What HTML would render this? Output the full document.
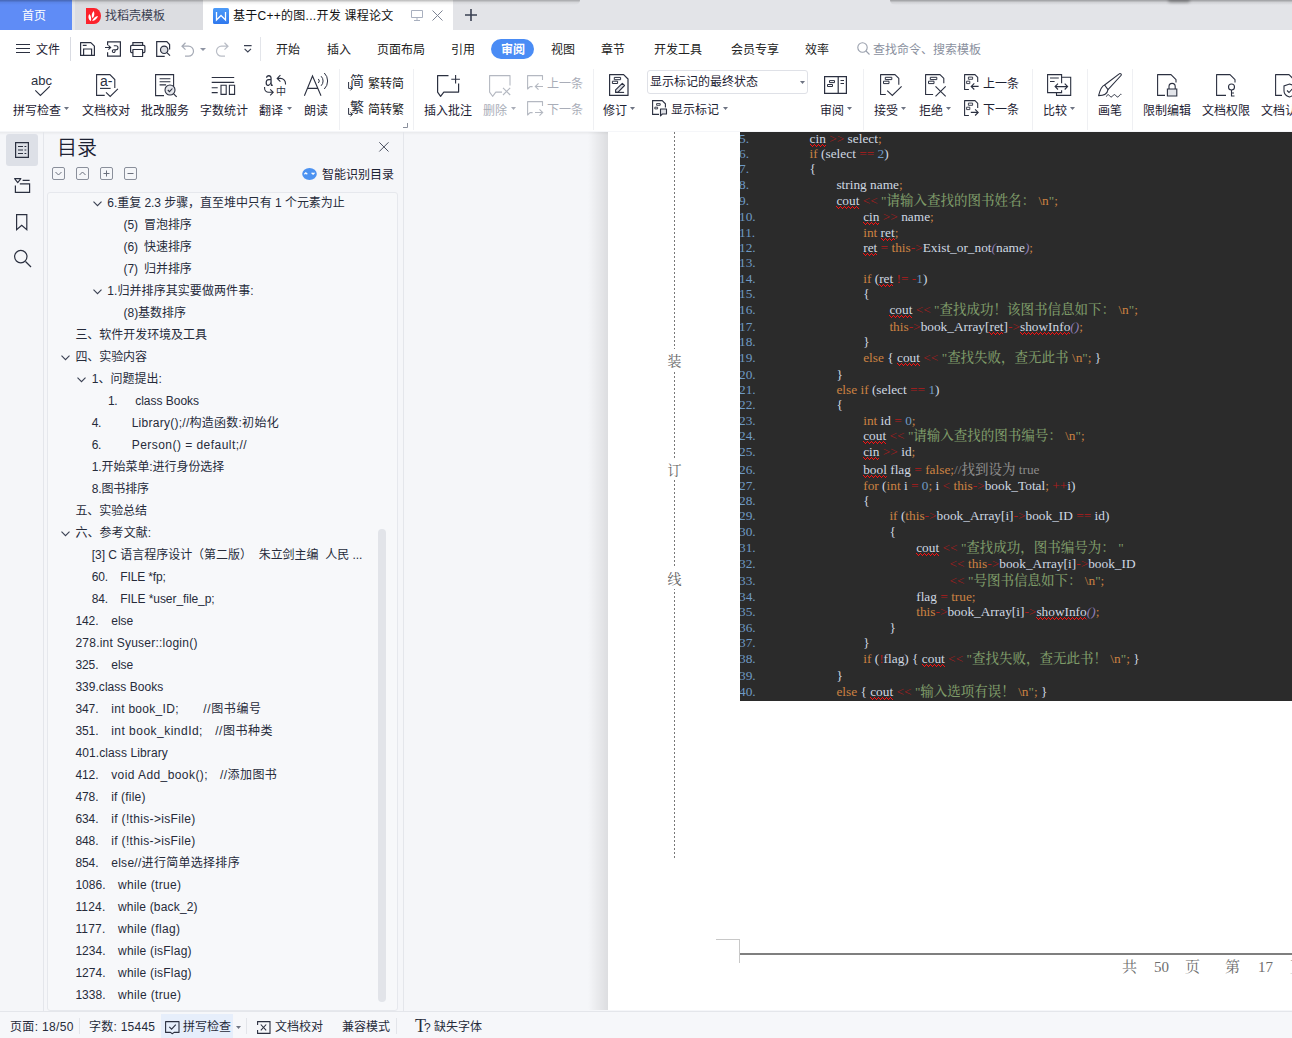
<!DOCTYPE html>
<html lang="zh-CN">
<head>
<meta charset="utf-8">
<title>WPS</title>
<style>
*{box-sizing:border-box;margin:0;padding:0}
html,body{width:1292px;height:1038px;overflow:hidden;background:#fff}
body{position:relative;font-family:"Liberation Sans","Noto Sans CJK SC",sans-serif;font-size:12px;color:#222;}
.abs{position:absolute}
.t{position:absolute;white-space:nowrap;line-height:16px;height:16px}
svg{position:absolute;overflow:visible}
.lb{top:37px;color:#1d2233}
.dd{position:absolute;top:41px;width:5px;height:3px;background:#6d7382;clip-path:polygon(0 0,100% 0,50% 100%)}
.vs{position:absolute;top:3px;width:1px;height:61px;background:#eff0f3}
.ti{white-space:pre;color:#262b3a;line-height:18px;height:18px}
.cl{position:absolute;left:0;width:552px;height:16px;line-height:16px;font-family:"Liberation Serif","Noto Serif CJK SC",serif;font-size:13.330px;color:#cfd8e2;white-space:pre}
.ln{position:absolute;left:-1px;color:#6f9ac4}
.cd{position:absolute;top:0}
.k{color:#cc8242}.o{color:#b01c1c}.n{color:#6f9ac4}.s{color:#7d9a68}.c{color:#8a8a8a}.p{color:#8f7fb8;font-style:italic}
.z{font-family:"Noto Serif CJK SC",serif;font-size:13.500px;line-height:0;font-weight:500}
.w{position:relative}
.wv{position:absolute;left:0;top:13px;width:100%;height:3px;overflow:hidden}
.bz{font-family:"Noto Serif CJK SC",serif;font-size:14px;color:#666;background:#fff;line-height:22px;height:22px}
.ft{font-family:"Liberation Serif","Noto Serif CJK SC",serif;font-size:15px;color:#6e6e6e;line-height:20px;height:20px}
/* tab bar */
#tabbar{position:absolute;left:0;top:0;width:1292px;height:30px;background:#e3e4e8}
#tab-home{position:absolute;left:0;top:0;width:72px;height:30px;background:#5f8cf6;color:#fff;font-size:12px;line-height:32px;text-align:left;padding-left:22px}
#tab-tpl{position:absolute;left:72px;top:0;width:131px;height:30px;background:#dcdde1}
#tab-doc{position:absolute;left:203px;top:0;width:250px;height:30px;background:#fff}
/* menu row */
#menurow{position:absolute;left:0;top:30px;width:1292px;height:36px;background:#fff}
#ribbon{position:absolute;left:0;top:66px;width:1292px;height:65px;background:#fff}
#main{position:absolute;left:0;top:131px;width:1292px;height:880px;background:#f5f6f9;overflow:hidden}
#status{position:absolute;left:0;top:1011px;width:1292px;height:27px;background:#f6f7fa;border-top:1px solid #e4e6eb}
</style>
</head>
<body>
<div id="tabbar">
  <div id="tab-home">首页</div>
  <div id="tab-tpl">
    <svg style="left:14px;top:8px" width="15" height="16" viewBox="0 0 15 16"><path d="M0 0h8a7 8 0 0 1 0 16h-8z" fill="#fc222c"/><path d="M3.200 6c2 2 2.500 4.600 1.500 7.300-2.300-1.700-3-4.700-1.500-7.300zM7.700 2.900c1.200 2.500.8 5.200-1.200 7.400-1.400-2.500-.8-5.400 1.200-7.400zM12 8c-.7 2.700-2.900 4.600-5.800 5.100.7-2.800 3-4.700 5.800-5.100z" fill="#fff"/></svg>
    <span class="t" style="left:33px;top:8px;color:#3a4052">找稻壳模板</span>
  </div>
  <div id="tab-doc">
    <svg style="left:10px;top:8px" width="16" height="16" viewBox="0 0 16 16"><defs><linearGradient id="wg" x1="0" y1="0" x2="0" y2="1"><stop offset="0" stop-color="#4d9bf8"/><stop offset="1" stop-color="#2f78ee"/></linearGradient></defs><rect width="16" height="16" rx="1.500" fill="url(#wg)"/><path d="M3.500 4v8l4.500-4.500 4.500 4.500v-8" fill="none" stroke="#fff" stroke-width="1.300"/></svg>
    <span class="t" style="left:30px;top:8px;font-size:12px;color:#111;letter-spacing:.27px">基于C++的图...开发 课程论文</span>
    <svg style="left:208px;top:10px" width="12" height="11" viewBox="0 0 12 11"><path d="M.5.500h11v7h-11zM6 7.500v3M3 10.500h6" fill="none" stroke="#a9b0bf" stroke-width="1"/></svg>
    <svg style="left:229px;top:10px" width="11" height="11" viewBox="0 0 11 11"><path d="M.5.500l10 10M10.500.500l-10 10" fill="none" stroke="#7d8494" stroke-width="1"/></svg>
  </div>
  <svg style="left:465px;top:9px" width="12" height="12" viewBox="0 0 12 12"><path d="M6 0v12M0 6h12" fill="none" stroke="#3a4052" stroke-width="1.600"/></svg>
  <div class="abs" style="left:72px;top:0;width:3px;height:30px;background:#e6e7ea"></div>
  <div class="abs" style="left:0;top:0;width:580px;height:5px;background:linear-gradient(rgba(0,0,0,.28),rgba(0,0,0,.06) 50%,rgba(0,0,0,0));border-radius:0 0 6px 0"></div>
  <div class="abs" style="left:890px;top:0;width:402px;height:5px;background:linear-gradient(rgba(0,0,0,.32),rgba(0,0,0,.08) 50%,rgba(0,0,0,0));border-radius:0 0 0 6px"></div>
  <div class="abs" style="left:1168px;top:-3px;width:22px;height:6px;background:rgba(0,0,0,.25);border-radius:3px;filter:blur(1.500px)"></div>
</div>
<div id="menurow">
  <svg style="left:16px;top:14px" width="15" height="10" viewBox="0 0 15 10"><path d="M0 .500h14M0 4.500h14M0 8.500h14" stroke="#2b3040" stroke-width="1" fill="none"/></svg>
  <span class="t" style="left:36px;top:12px;color:#1d2233">文件</span>
  <div class="abs" style="left:70px;top:7px;width:1px;height:24px;background:#d9dbe2"></div>
  <!-- save -->
  <svg style="left:80px;top:12px" width="15" height="14" viewBox="0 0 15 14"><path d="M.6.600h10.200l3.600 3.600v9.200h-13.800z" fill="none" stroke="#2b3040" stroke-width="1.200" stroke-linejoin="round"/><path d="M2.800 3.400h3.800M3.600 13.400v-6.400h8v6.400" fill="none" stroke="#2b3040" stroke-width="1.200"/></svg>
  <!-- export -->
  <svg style="left:105px;top:11px" width="16" height="16" viewBox="0 0 16 16"><path d="M2.600 4.200v-3.400h12.800v14.400h-12.800v-4" fill="none" stroke="#2b3040" stroke-width="1.200"/><path d="M0 6.500h5.600M3.400 4.300l2.300 2.200-2.300 2.200" fill="none" stroke="#2b3040" stroke-width="1.100"/><path d="M8.800 4.700h2.200a2 2 0 0 1 0 4h-2.300a1.400 1.400 0 1 0 1.400 1.400v-1.200" fill="none" stroke="#2b3040" stroke-width="1.100"/></svg>
  <!-- print -->
  <svg style="left:130px;top:12px" width="16" height="15" viewBox="0 0 16 15"><path d="M2.900 3.400v-2.800h9.700v2.800" fill="none" stroke="#2b3040" stroke-width="1.200"/><path d="M2.900 10.600h-1.300a1 1 0 0 1-1-1v-5.200a1 1 0 0 1 1-1h12.300a1 1 0 0 1 1 1v5.200a1 1 0 0 1-1 1h-1.300" fill="none" stroke="#2b3040" stroke-width="1.200"/><path d="M2.900 7.500h9.700v7h-9.700z" fill="none" stroke="#2b3040" stroke-width="1.200" stroke-linejoin="round"/></svg>
  <!-- preview -->
  <svg style="left:156px;top:11px" width="15" height="16" viewBox="0 0 15 16"><path d="M13.600 8.500v-5l-2.800-2.800h-10.100v14.600h8" fill="none" stroke="#2b3040" stroke-width="1.200"/><circle cx="8.200" cy="8.800" r="3.700" fill="#dcdee3" stroke="#2b3040" stroke-width="1.200"/><path d="M10.900 11.600l3.100 3.100" stroke="#2b3040" stroke-width="1.200"/></svg>
  <!-- undo -->
  <svg style="left:181px;top:12px" width="14" height="15" viewBox="0 0 14 15"><path d="M4.500.800l-3.500 3.400 3.500 3.400M1.200 4.200h6.300a5 5 0 0 1 0 10h-3.500" fill="none" stroke="#a6abb6" stroke-width="1.200"/></svg>
  <svg style="left:200px;top:18px" width="6" height="3" viewBox="0 0 6 3"><path d="M0 0h6l-3 3z" fill="#8e94a3"/></svg>
  <!-- redo -->
  <svg style="left:215px;top:12px" width="14" height="15" viewBox="0 0 14 15"><path d="M9.500.800l3.500 3.400-3.500 3.400M12.800 4.200h-6.300a5 5 0 0 0 0 10h3.500" fill="none" stroke="#b9bdc6" stroke-width="1.200"/></svg>
  <!-- more -->
  <svg style="left:244px;top:15px" width="8" height="8" viewBox="0 0 8 8"><path d="M0 .600h7.600M.6 3.800l3.200 3.200 3.200-3.200" fill="none" stroke="#3a4052" stroke-width="1.100"/></svg>
  <div class="abs" style="left:260px;top:7px;width:1px;height:24px;background:#e3e5ea"></div>
  <span class="t" style="left:276px;top:12px">开始</span>
  <span class="t" style="left:327px;top:12px">插入</span>
  <span class="t" style="left:377px;top:12px">页面布局</span>
  <span class="t" style="left:451px;top:12px">引用</span>
  <div class="abs" style="left:491px;top:9px;width:43px;height:20px;border-radius:10px;background:#4a8cf5"></div>
  <span class="t" style="left:501px;top:12px;color:#fff;font-weight:bold">审阅</span>
  <span class="t" style="left:551px;top:12px">视图</span>
  <span class="t" style="left:601px;top:12px">章节</span>
  <span class="t" style="left:654px;top:12px">开发工具</span>
  <span class="t" style="left:731px;top:12px">会员专享</span>
  <span class="t" style="left:805px;top:12px">效率</span>
  <svg style="left:857px;top:12px" width="13" height="13" viewBox="0 0 13 13"><circle cx="5.500" cy="5.500" r="4.700" fill="none" stroke="#9aa0ad" stroke-width="1.100"/><path d="M9 9l3.500 3.500" stroke="#9aa0ad" stroke-width="1.100"/></svg>
  <span class="t" style="left:873px;top:12px;color:#8a909e">查找命令、搜索模板</span>
</div>
<div id="ribbon">
  <!-- 拼写检查 -->
  <span class="t" style="left:31px;top:6px;font-size:13px;line-height:18px;height:18px;color:#2b3040;letter-spacing:0">abc</span>
  <svg style="left:34px;top:20px" width="18" height="11" viewBox="0 0 18 11"><path d="M1.300 4.300l5.100 5.100 9.400-9.100" fill="none" stroke="#2b3040" stroke-width="1.100"/></svg>
  <span class="t lb" style="left:13px">拼写检查</span><i class="dd" style="left:64px"></i>
  <!-- 文档校对 -->
  <svg style="left:96px;top:8px" width="23" height="24" viewBox="0 0 23 24"><path d="M8.700 21.400h-8.100v-20.800h13.300l4.900 4.900v8.500" fill="none" stroke="#2b3040" stroke-width="1.100"/><path d="M4 14.400h10.600" stroke="#2b3040" stroke-width="1.100"/><path d="M10 18.300l4.200 4.200 7.700-7.600" fill="none" stroke="#2b3040" stroke-width="1.100"/></svg>
  <span class="t" style="left:100px;top:6px;font-size:14px;line-height:18px;height:18px;color:#2b3040;letter-spacing:0">a-</span>
  <span class="t lb" style="left:82px">文档校对</span>
  <!-- 批改服务 -->
  <svg style="left:155px;top:8px" width="23" height="25" viewBox="0 0 23 25"><path d="M9 21.600h-8.400v-21h18v11.500" fill="none" stroke="#2b3040" stroke-width="1.100"/><path d="M4.600 4.700h10.800M4.600 7.800h10.800M4.600 10.900h6.500" stroke="#2b3040" stroke-width="1.100"/><circle cx="15" cy="16" r="5" fill="#e3e5ea" stroke="#2b3040" stroke-width="1.100"/><path d="M12.800 16l1.700 1.700 2.900-3.200" fill="none" stroke="#2b3040" stroke-width="1.100"/><path d="M18.700 19.800l3 3" stroke="#2b3040" stroke-width="1.200"/></svg>
  <span class="t lb" style="left:141px">批改服务</span>
  <!-- 字数统计 -->
  <svg style="left:211px;top:9px" width="24" height="21" viewBox="0 0 24 21"><path d="M.7 2.500h22.500M.7 7.400h22.500M.7 12.800h6M.7 17.600h6" stroke="#2b3040" stroke-width="1.100"/><path d="M10 10.200h5.200v9.200h-5.200zM18.400 10.200h5.200v9.200h-5.200z" fill="none" stroke="#2b3040" stroke-width="1.100"/></svg>
  <span class="t lb" style="left:200px">字数统计</span>
  <!-- 翻译 -->
  <span class="t" style="left:265px;top:1px;font-size:20px;line-height:24px;height:24px;color:#2b3040;transform:scaleX(.7);transform-origin:0 0">a</span>
  <span class="t" style="left:276px;top:18px;font-size:10px;line-height:16px;color:#2b3040">中</span>
  <svg style="left:264px;top:8px" width="24" height="24" viewBox="0 0 24 24"><path d="M13.200 4.400h3.300a5 5 0 0 1 5 5v1.200M16.400 1.200l-3.200 3.200 3.200 3.200" fill="none" stroke="#2b3040" stroke-width="1.100"/><path d="M.6 13v1.300a4 4 0 0 0 4 4h4.400M6.200 15.300l3 3-3 3" fill="none" stroke="#2b3040" stroke-width="1.100"/></svg>
  <span class="t lb" style="left:259px">翻译</span><i class="dd" style="left:287px"></i>
  <!-- 朗读 -->
  <svg style="left:304px;top:8px" width="25" height="24" viewBox="0 0 25 24"><path d="M.4 21.800l8.100-19.800 8.500 19.800M3.500 14.400h10.200" fill="none" stroke="#2b3040" stroke-width="1.100"/><path d="M14.350 4.950a2.900 2.900 0 0 1 0 4.100M17.100 2.200a6.800 6.800 0 0 1 0 9.600M20.300-1a11.300 11.300 0 0 1 0 16" fill="none" stroke="#2b3040" stroke-width="1"/></svg>
  <span class="t lb" style="left:304px">朗读</span>
  <div class="vs" style="left:339px"></div>
  <!-- 繁转简 -->
  <span class="t" style="left:350px;top:6px;font-size:14px;line-height:18px;height:18px;color:#2b3040">简</span>
  <svg style="left:348px;top:16px" width="5" height="9" viewBox="0 0 5 9"><path d="M.6 0v6.400h3.600M2.400 4.400l2 2-2 2" fill="none" stroke="#2b3040" stroke-width="1"/></svg>
  <span class="t" style="left:368px;top:10px">繁转简</span>
  <span class="t" style="left:350px;top:32px;font-size:14px;line-height:18px;height:18px;color:#2b3040">繁</span>
  <svg style="left:348px;top:42px" width="5" height="9" viewBox="0 0 5 9"><path d="M.6 0v6.400h3.600M2.400 4.400l2 2-2 2" fill="none" stroke="#2b3040" stroke-width="1"/></svg>
  <span class="t" style="left:368px;top:36px">简转繁</span>
  <svg style="left:403px;top:57px" width="5" height="5" viewBox="0 0 5 5"><path d="M4.500 0v4.500h-4.500" fill="none" stroke="#8a8f9c" stroke-width="1"/></svg>
  <div class="vs" style="left:413px"></div>
  <!-- 插入批注 -->
  <svg style="left:437px;top:9px" width="23" height="23" viewBox="0 0 23 23"><path d="M11.500.600h-10.900v16.500l3 4.200 3.200-4.200h14.800v-8.500" fill="none" stroke="#2b3040" stroke-width="1.200" stroke-linejoin="round"/><path d="M18.600 0v8.600M14.300 4.300h8.600" stroke="#2b3040" stroke-width="1.100"/></svg>
  <span class="t lb" style="left:424px">插入批注</span>
  <!-- 删除 -->
  <svg style="left:488px;top:9px" width="23" height="23" viewBox="0 0 23 23"><path d="M14 17.100h-6.200l-3.200 4.200-3-4.200v-16.500h20.400v10" fill="none" stroke="#b4b8c1" stroke-width="1.100" stroke-linejoin="round"/><path d="M15 12.800l7.200 7.200M22.200 12.800l-7.200 7.200" stroke="#b4b8c1" stroke-width="1.100"/></svg>
  <span class="t lb" style="left:483px;color:#a9adb8">删除</span><i class="dd" style="left:511px;background:#a9adb8"></i>
  <!-- 上一条 / 下一条 (disabled) -->
  <svg style="left:527px;top:9px" width="17" height="16" viewBox="0 0 17 16"><path d="M15.500 5v-4.400h-14.900v13.400l2.400-2.400h2.600" fill="none" stroke="#b4b8c1" stroke-width="1.100" stroke-linejoin="round"/><path d="M16 11.500h-7.500M11.500 8.300l-3.200 3.200 3.200 3.200" fill="none" stroke="#b4b8c1" stroke-width="1.100"/></svg>
  <span class="t" style="left:547px;top:10px;color:#a9adb8">上一条</span>
  <svg style="left:527px;top:35px" width="17" height="16" viewBox="0 0 17 16"><path d="M15.500 5v-4.400h-14.900v13.400l2.400-2.400h2.600" fill="none" stroke="#b4b8c1" stroke-width="1.100" stroke-linejoin="round"/><path d="M8 11.500h7.500M12.500 8.300l3.200 3.200-3.200 3.200" fill="none" stroke="#b4b8c1" stroke-width="1.100"/></svg>
  <span class="t" style="left:547px;top:36px;color:#a9adb8">下一条</span>
  <div class="vs" style="left:593px"></div>
  <!-- 修订 -->
  <svg style="left:609px;top:8px" width="20" height="22" viewBox="0 0 20 22"><path d="M.6.600h14l4.400 4.400v16.400h-18.400z" fill="none" stroke="#2b3040" stroke-width="1.200" stroke-linejoin="round"/><path d="M5.300 3.400h6.300v2.300h-6.300zM3.400 7.200h5.200v2.300h-5.200z" fill="none" stroke="#2b3040" stroke-width="1"/><path d="M6.600 18.400v-2.600l6.700-6.500 2.200 2.200-6.600 6.900z" fill="#dfe1e6" stroke="#2b3040" stroke-width="1.100" stroke-linejoin="round"/><path d="M6.600 18.400h8.500" stroke="#2b3040" stroke-width="1.100"/></svg>
  <span class="t lb" style="left:603px">修订</span><i class="dd" style="left:630px"></i>
  <!-- dropdown -->
  <div class="abs" style="left:647px;top:4px;width:161px;height:24px;border:1px solid #dfe1e7;border-radius:3px;background:#fff"></div>
  <span class="t" style="left:650px;top:8px;color:#1d2233">显示标记的最终状态</span>
  <i class="dd" style="left:800px;top:15px"></i>
  <!-- 显示标记 -->
  <svg style="left:652px;top:34px" width="16" height="16" viewBox="0 0 16 16"><path d="M7 14.400h-6.400v-13.800h9.600l3.200 3.200v3.800" fill="none" stroke="#2b3040" stroke-width="1.100"/><path d="M4.600 3.600h3.600v1.700h-3.600zM2.800 7.200h2.800v1.700h-2.800z" fill="none" stroke="#2b3040" stroke-width=".9"/><path d="M8.500 9h6v5h-4.200l-1.800 1.800z" fill="#dfe1e6" stroke="#2b3040" stroke-width="1.100" stroke-linejoin="round"/></svg>
  <span class="t" style="left:671px;top:36px;color:#1d2233">显示标记</span><i class="dd" style="left:723px;top:41px"></i>
  <!-- 审阅 -->
  <svg style="left:824px;top:10px" width="23" height="18" viewBox="0 0 23 18"><path d="M.6.600h21.800v16.800h-21.800zM14.200.600v16.800" fill="none" stroke="#2b3040" stroke-width="1.200"/><path d="M5.500 4.600h5v2h-5zM3.500 8.500h5v2h-5z" fill="none" stroke="#2b3040" stroke-width="1"/><path d="M16.500 4.500h3.500M16.500 7.500h3.500" stroke="#2b3040" stroke-width="1"/></svg>
  <span class="t lb" style="left:820px">审阅</span><i class="dd" style="left:847px"></i>
  <div class="vs" style="left:863px"></div>
  <!-- 接受 -->
  <svg style="left:880px;top:8px" width="23" height="23" viewBox="0 0 23 23"><path d="M5.800 20.500h-5.200v-19.900h14.400l3.800 3.800v6.300" fill="none" stroke="#2b3040" stroke-width="1.100" stroke-linejoin="round"/><path d="M5.300 3.300h6.500v2.300h-6.500zM3.500 7.200h5.500v2.400h-5.500z" fill="none" stroke="#2b3040" stroke-width="1"/><path d="M7.200 16.700l5.100 4.700 9.300-9" fill="none" stroke="#2b3040" stroke-width="1.100"/></svg>
  <span class="t lb" style="left:874px">接受</span><i class="dd" style="left:901px"></i>
  <!-- 拒绝 -->
  <svg style="left:925px;top:8px" width="23" height="24" viewBox="0 0 23 24"><path d="M8.100 20.500h-7.500v-19.900h14.400l3.800 3.800v4.900" fill="none" stroke="#2b3040" stroke-width="1.100" stroke-linejoin="round"/><path d="M5.300 3.300h6.500v2.300h-6.500zM3.500 7.200h5.500v2.400h-5.500z" fill="none" stroke="#2b3040" stroke-width="1"/><path d="M10.500 12.400l10.200 9.900M20.700 12.400l-10.200 9.900" fill="none" stroke="#2b3040" stroke-width="1.100"/></svg>
  <span class="t lb" style="left:919px">拒绝</span><i class="dd" style="left:946px"></i>
  <!-- 上一条 / 下一条 -->
  <svg style="left:964px;top:8px" width="16" height="17" viewBox="0 0 16 17"><path d="M4.900 15.500h-4.300v-14.900h10.400l2.700 2.700v4.700" fill="none" stroke="#2b3040" stroke-width="1.100" stroke-linejoin="round"/><path d="M4.400 3.100h4.200v2.200h-4.200zM2.600 7.200h3.200v2.400h-3.200z" fill="none" stroke="#2b3040" stroke-width=".9"/><path d="M14.600 12.400h-7.400M10.300 9.300l-3.100 3.100 3.100 3.100" fill="none" stroke="#2b3040" stroke-width="1.100"/></svg>
  <span class="t" style="left:983px;top:10px;color:#1d2233">上一条</span>
  <svg style="left:964px;top:34px" width="16" height="17" viewBox="0 0 16 17"><path d="M4.900 15.500h-4.300v-14.900h10.400l2.700 2.700v4.700" fill="none" stroke="#2b3040" stroke-width="1.100" stroke-linejoin="round"/><path d="M4.400 3.100h4.200v2.200h-4.200zM2.600 7.200h3.200v2.400h-3.200z" fill="none" stroke="#2b3040" stroke-width=".9"/><path d="M6.800 12.400h7.400M11.100 9.300l3.100 3.100-3.100 3.100" fill="none" stroke="#2b3040" stroke-width="1.100"/></svg>
  <span class="t" style="left:983px;top:36px;color:#1d2233">下一条</span>
  <div class="vs" style="left:1032px"></div>
  <!-- 比较 -->
  <svg style="left:1047px;top:8px" width="24" height="22" viewBox="0 0 24 22"><path d="M14.600 9.300v-8.700h-14v18h14v-2.300" fill="none" stroke="#2b3040" stroke-width="1.100"/><path d="M3 4h8.800M3 7.500h4.600" stroke="#2b3040" stroke-width="1"/><path d="M14.600 3.300h9.100v18.100h-14.200v-2.800" fill="none" stroke="#2b3040" stroke-width="1.100"/><path d="M8.300 12.600h12.300M11 9.700l-2.900 2.900 2.900 2.900M17.700 9.700l2.900 2.900-2.900 2.900" fill="none" stroke="#2b3040" stroke-width="1.100"/></svg>
  <span class="t lb" style="left:1043px">比较</span><i class="dd" style="left:1070px"></i>
  <div class="vs" style="left:1087px"></div>
  <!-- 画笔 -->
  <svg style="left:1098px;top:7px" width="25" height="25" viewBox="0 0 25 25"><path d="M6.600 12l14.600-11.100a1.200 1.200 0 0 1 1.800 1.600l-13 14.100" fill="none" stroke="#2b3040" stroke-width="1.100"/><path d="M6.600 12c-3.300 1.200-4.600 5-6 10.600 4.500 0 8.600-1.100 9.400-6z" fill="none" stroke="#2b3040" stroke-width="1.100" stroke-linejoin="round"/><path d="M8.400 23.600c1-2.400 2.200-2.400 3.200-.8s2.200 1.600 3.200 0 2.200-1.600 3.200 0 2.200 1.600 3.200 0 1.400-1.600 2.200-1.400" fill="none" stroke="#2b3040" stroke-width="1"/></svg>
  <span class="t lb" style="left:1098px">画笔</span>
  <div class="vs" style="left:1132px"></div>
  <!-- 限制编辑 -->
  <svg style="left:1157px;top:8px" width="21" height="23" viewBox="0 0 21 23"><path d="M8 21.400h-7.400v-20.800h13.400l5 5v3" fill="none" stroke="#2b3040" stroke-width="1.100" stroke-linejoin="round"/><path d="M10.400 15h9.400v7h-9.400z" fill="#e3e5ea" stroke="#2b3040" stroke-width="1.100"/><path d="M12 15v-2.500a3.100 3.100 0 0 1 6.200 0v2.500" fill="none" stroke="#2b3040" stroke-width="1.100"/></svg>
  <span class="t lb" style="left:1143px">限制编辑</span>
  <!-- 文档权限 -->
  <svg style="left:1216px;top:8px" width="21" height="23" viewBox="0 0 21 23"><path d="M10 21.400h-9.400v-20.800h13.400l5 5v3" fill="none" stroke="#2b3040" stroke-width="1.100" stroke-linejoin="round"/><circle cx="15.500" cy="13" r="3" fill="none" stroke="#2b3040" stroke-width="1.100"/><path d="M15.500 16v6h3M15.500 19h2.500" fill="none" stroke="#2b3040" stroke-width="1.100"/></svg>
  <span class="t lb" style="left:1202px">文档权限</span>
  <!-- 文档认证 -->
  <svg style="left:1275px;top:8px" width="21" height="23" viewBox="0 0 21 23"><path d="M7 21.400h-6.400v-20.800h13.400l5 5" fill="none" stroke="#2b3040" stroke-width="1.100" stroke-linejoin="round"/><path d="M14.500 10l5.500 2v5c0 3-2.500 5-5.500 6-3-1-5.500-3-5.500-6v-5z" fill="#fff" stroke="#2b3040" stroke-width="1.100"/><path d="M12 16.500l2 2 3.500-3.800" fill="none" stroke="#2b3040" stroke-width="1.100"/></svg>
  <span class="t lb" style="left:1261px">文档认证</span>
</div>
<div id="main">
  <div class="abs" style="left:0;top:1px;width:1292px;height:3px;background:linear-gradient(rgba(0,0,0,.05),rgba(0,0,0,0))"></div>
  <div class="abs" style="left:43px;top:1px;width:1px;height:880px;background:#e4e6eb"></div>
  <div class="abs" style="left:6px;top:3px;width:32px;height:32px;border-radius:3px;background:#dde0e7"></div>
  <svg style="left:15px;top:11px" width="14" height="16" viewBox="0 0 14 16"><path d="M.6.600h12.800v14.800h-12.800z" fill="none" stroke="#2b3040" stroke-width="1.200"/><path d="M3 4.500h5M3 8h5M3 11.500h5M9.500 4.500h1.800M9.500 8h1.800M9.500 11.500h1.800" stroke="#2b3040" stroke-width="1.100"/></svg>
  <svg style="left:14px;top:47px" width="17" height="16" viewBox="0 0 17 16"><path d="M.6.600h6.300l-3.150 4.100zM8.600 2.400h7" fill="none" stroke="#2b3040" stroke-width="1.100" stroke-linejoin="round"/><path d="M1.400 7.400v7h14.200v-8.600h-9.800" fill="none" stroke="#2b3040" stroke-width="1.200"/></svg>
  <svg style="left:16px;top:83px" width="12" height="17" viewBox="0 0 12 17"><path d="M.6.600h10.200v15l-5.100-4.400-5.100 4.400z" fill="none" stroke="#2b3040" stroke-width="1.200" stroke-linejoin="miter"/></svg>
  <svg style="left:14px;top:119px" width="18" height="18" viewBox="0 0 18 18"><circle cx="6.800" cy="6.600" r="6.200" fill="none" stroke="#2b3040" stroke-width="1.200"/><path d="M11.500 11.500l5.500 5.500" stroke="#2b3040" stroke-width="1.300"/></svg>
  <span class="t" style="left:57px;top:3px;font-size:20px;line-height:28px;height:28px;color:#1d2233;font-weight:350">目录</span>
  <svg style="left:379px;top:11px" width="10" height="10" viewBox="0 0 10 10"><path d="M.3.300l9.200 9.200M9.500.300l-9.200 9.200" stroke="#4a5060" stroke-width="1" fill="none"/></svg>
  <svg style="left:52px;top:36px" width="13" height="13" viewBox="0 0 13 13"><rect x=".5" y=".5" width="12" height="12" rx="1.500" fill="none" stroke="#8a8f9b" stroke-width="1"/><path d="M3.500 5l3 3 3-3" fill="none" stroke="#6a6f7c" stroke-width="1"/></svg>
  <svg style="left:76px;top:36px" width="13" height="13" viewBox="0 0 13 13"><rect x=".5" y=".5" width="12" height="12" rx="1.500" fill="none" stroke="#8a8f9b" stroke-width="1"/><path d="M3.500 8l3-3 3 3" fill="none" stroke="#6a6f7c" stroke-width="1"/></svg>
  <svg style="left:100px;top:36px" width="13" height="13" viewBox="0 0 13 13"><rect x=".5" y=".5" width="12" height="12" rx="1.500" fill="none" stroke="#8a8f9b" stroke-width="1"/><path d="M3.500 6.500h6M6.500 3.500v6" fill="none" stroke="#6a6f7c" stroke-width="1"/></svg>
  <svg style="left:124px;top:36px" width="13" height="13" viewBox="0 0 13 13"><rect x=".5" y=".5" width="12" height="12" rx="1.500" fill="none" stroke="#8a8f9b" stroke-width="1"/><path d="M3.500 6.500h6" fill="none" stroke="#6a6f7c" stroke-width="1"/></svg>
  <svg style="left:302px;top:37px" width="15" height="12" viewBox="0 0 15 12"><ellipse cx="7.500" cy="6" rx="7.300" ry="6" fill="#4c92f1"/><path d="M2.400 6.200l1.400-1.400 1.500 1.400M9.600 4.800l1.500 1.400 1.400-1.400" fill="none" stroke="#fff" stroke-width="1.300"/></svg>
  <span class="t" style="left:322px;top:36px;color:#1d2233">智能识别目录</span>
  <div class="abs" style="left:47px;top:61px;width:351px;height:819px;border:1px solid #e6e8ed;border-radius:3px;background:#f7f8fa"></div>
  <div class="abs" style="left:378px;top:398px;width:8px;height:473px;border-radius:4px;background:#e2e4e9"></div>
  <svg style="left:93px;top:70px" width="9" height="6" viewBox="0 0 9 6"><path d="M.5.700l4 4 4-4" fill="none" stroke="#3a4052" stroke-width="1.100"/></svg>
  <span class="t ti" style="left:107.3px;top:63px;letter-spacing:-0.05px">6.重复 2.3 步骤，直至堆中只有 1 个元素为止</span>
  <span class="t ti" style="left:123.5px;top:85px;letter-spacing:-0.06px">(5)</span>
  <span class="t ti" style="left:144px;top:85px;letter-spacing:-0.05px">冒泡排序</span>
  <span class="t ti" style="left:123.5px;top:107px;letter-spacing:-0.06px">(6)</span>
  <span class="t ti" style="left:144px;top:107px;letter-spacing:-0.05px">快速排序</span>
  <span class="t ti" style="left:123.5px;top:129px;letter-spacing:-0.06px">(7)</span>
  <span class="t ti" style="left:144px;top:129px;letter-spacing:-0.05px">归并排序</span>
  <svg style="left:93px;top:158px" width="9" height="6" viewBox="0 0 9 6"><path d="M.5.700l4 4 4-4" fill="none" stroke="#3a4052" stroke-width="1.100"/></svg>
  <span class="t ti" style="left:107.3px;top:151px;letter-spacing:0.07px">1.归并排序其实要做两件事:</span>
  <span class="t ti" style="left:123.5px;top:173px;letter-spacing:-0.02px">(8)基数排序</span>
  <span class="t ti" style="left:75.4px;top:195px;letter-spacing:-0.04px">三、软件开发环境及工具</span>
  <svg style="left:61px;top:224px" width="9" height="6" viewBox="0 0 9 6"><path d="M.5.700l4 4 4-4" fill="none" stroke="#3a4052" stroke-width="1.100"/></svg>
  <span class="t ti" style="left:75.4px;top:217px;letter-spacing:-0.07px">四、实验内容</span>
  <svg style="left:77px;top:246px" width="9" height="6" viewBox="0 0 9 6"><path d="M.5.700l4 4 4-4" fill="none" stroke="#3a4052" stroke-width="1.100"/></svg>
  <span class="t ti" style="left:91.7px;top:239px;letter-spacing:0.03px">1、问题提出:</span>
  <span class="t ti" style="left:108px;top:261px;letter-spacing:-0.51px">1.</span>
  <span class="t ti" style="left:135.2px;top:261px;letter-spacing:-0.02px">class Books</span>
  <span class="t ti" style="left:91.7px;top:283px;letter-spacing:-0.36px">4.</span>
  <span class="t ti" style="left:131.7px;top:283px;letter-spacing:0.26px">Library();//构造函数:初始化</span>
  <span class="t ti" style="left:91.7px;top:305px;letter-spacing:-0.36px">6.</span>
  <span class="t ti" style="left:131.7px;top:305px;letter-spacing:0.46px">Person() = default;//</span>
  <span class="t ti" style="left:91.7px;top:327px;letter-spacing:-0.06px">1.开始菜单:进行身份选择</span>
  <span class="t ti" style="left:91.7px;top:349px;letter-spacing:-0.12px">8.图书排序</span>
  <span class="t ti" style="left:75.4px;top:371px;letter-spacing:-0.07px">五、实验总结</span>
  <svg style="left:61px;top:400px" width="9" height="6" viewBox="0 0 9 6"><path d="M.5.700l4 4 4-4" fill="none" stroke="#3a4052" stroke-width="1.100"/></svg>
  <span class="t ti" style="left:75.4px;top:393px;letter-spacing:0.07px">六、参考文献:</span>
  <span class="t ti" style="left:91.7px;top:415px;letter-spacing:-0.02px">[3] C 语言程序设计（第二版）  朱立剑主编  人民 ...</span>
  <span class="t ti" style="left:91.7px;top:437px;letter-spacing:-0.13px">60.</span>
  <span class="t ti" style="left:120.3px;top:437px;letter-spacing:-0.13px">FILE *fp;</span>
  <span class="t ti" style="left:91.7px;top:459px;letter-spacing:-0.13px">84.</span>
  <span class="t ti" style="left:120.3px;top:459px;letter-spacing:-0.06px">FILE *user_file_p;</span>
  <span class="t ti" style="left:75.4px;top:481px;letter-spacing:-0.06px">142.</span>
  <span class="t ti" style="left:111.2px;top:481px;letter-spacing:0.02px">else</span>
  <span class="t ti" style="left:75.4px;top:503px;letter-spacing:0.24px">278.int Syuser::login()</span>
  <span class="t ti" style="left:75.4px;top:525px;letter-spacing:-0.06px">325.</span>
  <span class="t ti" style="left:111.2px;top:525px;letter-spacing:0.02px">else</span>
  <span class="t ti" style="left:75.4px;top:547px;letter-spacing:0.03px">339.class Books</span>
  <span class="t ti" style="left:75.4px;top:569px;letter-spacing:-0.06px">347.</span>
  <span class="t ti" style="left:111.2px;top:569px;letter-spacing:0.30px">int book_ID;</span>
  <span class="t ti" style="left:203.2px;top:569px;letter-spacing:0.64px">//图书编号</span>
  <span class="t ti" style="left:75.4px;top:591px;letter-spacing:-0.06px">351.</span>
  <span class="t ti" style="left:111.2px;top:591px;letter-spacing:0.48px">int book_kindId;</span>
  <span class="t ti" style="left:215.2px;top:591px;letter-spacing:0.52px">//图书种类</span>
  <span class="t ti" style="left:75.4px;top:613px;letter-spacing:0.11px">401.class Library</span>
  <span class="t ti" style="left:75.4px;top:635px;letter-spacing:-0.06px">412.</span>
  <span class="t ti" style="left:111.2px;top:635px;letter-spacing:0.42px">void Add_book();</span>
  <span class="t ti" style="left:220px;top:635px;letter-spacing:0.44px">//添加图书</span>
  <span class="t ti" style="left:75.4px;top:657px;letter-spacing:-0.06px">478.</span>
  <span class="t ti" style="left:111.2px;top:657px;letter-spacing:0.19px">if (file)</span>
  <span class="t ti" style="left:75.4px;top:679px;letter-spacing:-0.06px">634.</span>
  <span class="t ti" style="left:111.2px;top:679px;letter-spacing:0.34px">if (!this-&gt;isFile)</span>
  <span class="t ti" style="left:75.4px;top:701px;letter-spacing:-0.06px">848.</span>
  <span class="t ti" style="left:111.2px;top:701px;letter-spacing:0.34px">if (!this-&gt;isFile)</span>
  <span class="t ti" style="left:75.4px;top:723px;letter-spacing:-0.06px">854.</span>
  <span class="t ti" style="left:111.2px;top:723px;letter-spacing:0.29px">else//进行简单选择排序</span>
  <span class="t ti" style="left:75.4px;top:745px;letter-spacing:0.01px">1086.</span>
  <span class="t ti" style="left:118px;top:745px;letter-spacing:0.34px">while (true)</span>
  <span class="t ti" style="left:75.4px;top:767px;letter-spacing:0.19px">1124.</span>
  <span class="t ti" style="left:118px;top:767px;letter-spacing:0.17px">while (back_2)</span>
  <span class="t ti" style="left:75.4px;top:789px;letter-spacing:0.19px">1177.</span>
  <span class="t ti" style="left:118px;top:789px;letter-spacing:0.36px">while (flag)</span>
  <span class="t ti" style="left:75.4px;top:811px;letter-spacing:0.01px">1234.</span>
  <span class="t ti" style="left:118px;top:811px;letter-spacing:0.22px">while (isFlag)</span>
  <span class="t ti" style="left:75.4px;top:833px;letter-spacing:0.01px">1274.</span>
  <span class="t ti" style="left:118px;top:833px;letter-spacing:0.22px">while (isFlag)</span>
  <span class="t ti" style="left:75.4px;top:855px;letter-spacing:0.01px">1338.</span>
  <span class="t ti" style="left:118px;top:855px;letter-spacing:0.34px">while (true)</span>
  <div class="abs" style="left:403px;top:1px;width:1px;height:880px;background:#e4e6eb"></div>
<!--DOC-->
  <div class="abs" style="left:588px;top:1px;width:20px;height:878px;background:linear-gradient(90deg,rgba(0,0,0,0),rgba(0,0,0,.10))"></div>
  <div id="page" class="abs" style="left:608px;top:1px;width:684px;height:878px;background:#fff;overflow:hidden">
    <div class="abs" style="left:66px;top:0;width:1px;height:726px;background:repeating-linear-gradient(180deg,#787878 0,#787878 2px,rgba(255,255,255,0) 2px,rgba(255,255,255,0) 4px)"></div>
    <span class="t bz" style="left:59.5px;top:217px">装</span>
    <span class="t bz" style="left:59.5px;top:326px">订</span>
    <span class="t bz" style="left:59.5px;top:435px">线</span>
    <svg width="0" height="0" style="left:0;top:0"><defs><pattern id="wvp" width="4" height="3" patternUnits="userSpaceOnUse"><path d="M0 0h1v1h-1zM1 1h1v1h-1zM2 2h1v1h-1zM3 1h1v1h-1z" fill="#ff1010" shape-rendering="crispEdges"/></pattern></defs></svg>
    <div id="code" class="abs" style="left:132px;top:0;width:552px;height:568.5px;background:#2b2b2b;overflow:hidden">
      <div class="cl" style="top:-1.3px"><span class="ln">5.</span><span class="cd" id="cd5" style="left:69.6px"><span class="w">cin<svg class="wv"><rect width="100%" height="3" fill="url(#wvp)"/></svg></span> <span class="o">&gt;&gt;</span> select<span class="k">;</span></span></div>
      <div class="cl" style="top:14.2px"><span class="ln">6.</span><span class="cd" id="cd6" style="left:69.6px"><span class="k">if</span> (select <span class="o">==</span> <span class="n">2</span>)</span></div>
      <div class="cl" style="top:29.0px"><span class="ln">7.</span><span class="cd" id="cd7" style="left:69.6px">{</span></div>
      <div class="cl" style="top:44.8px"><span class="ln">8.</span><span class="cd" id="cd8" style="left:96.4px">string name<span class="k">;</span></span></div>
      <div class="cl" style="top:60.6px"><span class="ln">9.</span><span class="cd" id="cd9" style="left:96.4px"><span class="w">cout<svg class="wv"><rect width="100%" height="3" fill="url(#wvp)"/></svg></span> <span class="o">&lt;&lt;</span> <span class="s">"</span><span class="s z">请输入查找的图书姓名：</span><span class="s"> </span><span class="k">\n</span><span class="s">"</span><span class="k">;</span></span></div>
      <div class="cl" style="top:76.6px"><span class="ln">10.</span><span class="cd" id="cd10" style="left:123.2px"><span class="w">cin<svg class="wv"><rect width="100%" height="3" fill="url(#wvp)"/></svg></span> <span class="o">&gt;&gt;</span> name<span class="k">;</span></span></div>
      <div class="cl" style="top:92.6px"><span class="ln">11.</span><span class="cd" id="cd11" style="left:123.2px"><span class="k">int</span> <span class="w">ret<svg class="wv"><rect width="100%" height="3" fill="url(#wvp)"/></svg></span><span class="k">;</span></span></div>
      <div class="cl" style="top:107.8px"><span class="ln">12.</span><span class="cd" id="cd12" style="left:123.2px"><span class="w">ret<svg class="wv"><rect width="100%" height="3" fill="url(#wvp)"/></svg></span> <span class="o">=</span> <span class="k">this</span><span class="o">-&gt;</span>Exist_or_not<span class="p">(</span>name<span class="p">)</span><span class="k">;</span></span></div>
      <div class="cl" style="top:123.0px"><span class="ln">13.</span><span class="cd" id="cd13" style="left:123.2px"></span></div>
      <div class="cl" style="top:138.8px"><span class="ln">14.</span><span class="cd" id="cd14" style="left:123.2px"><span class="k">if</span> (<span class="w">ret<svg class="wv"><rect width="100%" height="3" fill="url(#wvp)"/></svg></span> <span class="o">!=</span> <span class="o">-</span><span class="n">1</span>)</span></div>
      <div class="cl" style="top:153.8px"><span class="ln">15.</span><span class="cd" id="cd15" style="left:123.2px">{</span></div>
      <div class="cl" style="top:170.0px"><span class="ln">16.</span><span class="cd" id="cd16" style="left:149.4px"><span class="w">cout<svg class="wv"><rect width="100%" height="3" fill="url(#wvp)"/></svg></span> <span class="o">&lt;&lt;</span> <span class="s">"</span><span class="s z">查找成功！该图书信息如下：</span><span class="s"> </span><span class="k">\n</span><span class="s">"</span><span class="k">;</span></span></div>
      <div class="cl" style="top:186.6px"><span class="ln">17.</span><span class="cd" id="cd17" style="left:149.4px"><span class="k">this</span><span class="o">-&gt;</span>book_Array[<span class="w">ret<svg class="wv"><rect width="100%" height="3" fill="url(#wvp)"/></svg></span>]<span class="o">-&gt;</span><span class="w">showInfo<svg class="wv"><rect width="100%" height="3" fill="url(#wvp)"/></svg></span><span class="p">()</span><span class="k">;</span></span></div>
      <div class="cl" style="top:201.7px"><span class="ln">18.</span><span class="cd" id="cd18" style="left:123.2px">}</span></div>
      <div class="cl" style="top:218.0px"><span class="ln">19.</span><span class="cd" id="cd19" style="left:123.2px"><span class="k">else</span> { <span class="w">cout<svg class="wv"><rect width="100%" height="3" fill="url(#wvp)"/></svg></span> <span class="o">&lt;&lt;</span> <span class="s">"</span><span class="s z">查找失败，查无此书</span><span class="s"> </span><span class="k">\n</span><span class="s">"</span><span class="k">;</span> }</span></div>
      <div class="cl" style="top:234.5px"><span class="ln">20.</span><span class="cd" id="cd20" style="left:96.4px">}</span></div>
      <div class="cl" style="top:249.5px"><span class="ln">21.</span><span class="cd" id="cd21" style="left:96.4px"><span class="k">else if</span> (select <span class="o">==</span> <span class="n">1</span>)</span></div>
      <div class="cl" style="top:264.7px"><span class="ln">22.</span><span class="cd" id="cd22" style="left:96.4px">{</span></div>
      <div class="cl" style="top:280.5px"><span class="ln">23.</span><span class="cd" id="cd23" style="left:123.2px"><span class="k">int</span> id <span class="o">=</span> <span class="n">0</span><span class="k">;</span></span></div>
      <div class="cl" style="top:296.4px"><span class="ln">24.</span><span class="cd" id="cd24" style="left:123.2px"><span class="w">cout<svg class="wv"><rect width="100%" height="3" fill="url(#wvp)"/></svg></span> <span class="o">&lt;&lt;</span> <span class="s">"</span><span class="s z">请输入查找的图书编号：</span><span class="s"> </span><span class="k">\n</span><span class="s">"</span><span class="k">;</span></span></div>
      <div class="cl" style="top:312.4px"><span class="ln">25.</span><span class="cd" id="cd25" style="left:123.2px"><span class="w">cin<svg class="wv"><rect width="100%" height="3" fill="url(#wvp)"/></svg></span> <span class="o">&gt;&gt;</span> id<span class="k">;</span></span></div>
      <div class="cl" style="top:329.5px"><span class="ln">26.</span><span class="cd" id="cd26" style="left:123.2px"><span class="w">bool<svg class="wv"><rect width="100%" height="3" fill="url(#wvp)"/></svg></span> flag <span class="o">=</span> <span class="k">false</span><span class="k">;</span><span class="c">//</span><span class="c z">找到设为</span><span class="c"> true</span></span></div>
      <div class="cl" style="top:345.5px"><span class="ln">27.</span><span class="cd" id="cd27" style="left:123.2px"><span class="k">for</span> (<span class="k">int</span> i <span class="o">=</span> <span class="n">0</span><span class="k">;</span> i <span class="o">&lt;</span> <span class="k">this</span><span class="o">-&gt;</span>book_Total<span class="k">;</span> <span class="o">++</span>i)</span></div>
      <div class="cl" style="top:360.5px"><span class="ln">28.</span><span class="cd" id="cd28" style="left:123.2px">{</span></div>
      <div class="cl" style="top:376.4px"><span class="ln">29.</span><span class="cd" id="cd29" style="left:149.4px"><span class="k">if</span> (<span class="k">this</span><span class="o">-&gt;</span>book_Array[i]<span class="o">-&gt;</span>book_ID <span class="o">==</span> id)</span></div>
      <div class="cl" style="top:391.6px"><span class="ln">30.</span><span class="cd" id="cd30" style="left:149.4px">{</span></div>
      <div class="cl" style="top:407.7px"><span class="ln">31.</span><span class="cd" id="cd31" style="left:176.2px"><span class="w">cout<svg class="wv"><rect width="100%" height="3" fill="url(#wvp)"/></svg></span> <span class="o">&lt;&lt;</span> <span class="s">"</span><span class="s z">查找成功，图书编号为：</span><span class="s"> "</span></span></div>
      <div class="cl" style="top:424.4px"><span class="ln">32.</span><span class="cd" id="cd32" style="left:209.6px"><span class="o">&lt;&lt;</span> <span class="k">this</span><span class="o">-&gt;</span>book_Array[i]<span class="o">-&gt;</span>book_ID</span></div>
      <div class="cl" style="top:440.5px"><span class="ln">33.</span><span class="cd" id="cd33" style="left:209.6px"><span class="o">&lt;&lt;</span> <span class="s">"</span><span class="s z">号图书信息如下：</span><span class="s"> </span><span class="k">\n</span><span class="s">"</span><span class="k">;</span></span></div>
      <div class="cl" style="top:456.9px"><span class="ln">34.</span><span class="cd" id="cd34" style="left:176.2px">flag <span class="o">=</span> <span class="k">true</span><span class="k">;</span></span></div>
      <div class="cl" style="top:472.2px"><span class="ln">35.</span><span class="cd" id="cd35" style="left:176.2px"><span class="k">this</span><span class="o">-&gt;</span>book_Array[i]<span class="o">-&gt;</span><span class="w">showInfo<svg class="wv"><rect width="100%" height="3" fill="url(#wvp)"/></svg></span><span class="p">()</span><span class="k">;</span></span></div>
      <div class="cl" style="top:487.7px"><span class="ln">36.</span><span class="cd" id="cd36" style="left:149.4px">}</span></div>
      <div class="cl" style="top:503.2px"><span class="ln">37.</span><span class="cd" id="cd37" style="left:123.2px">}</span></div>
      <div class="cl" style="top:519.4px"><span class="ln">38.</span><span class="cd" id="cd38" style="left:123.2px"><span class="k">if</span> (<span class="o">!</span>flag) { <span class="w">cout<svg class="wv"><rect width="100%" height="3" fill="url(#wvp)"/></svg></span> <span class="o">&lt;&lt;</span> <span class="s">"</span><span class="s z">查找失败，查无此书！</span><span class="s"> </span><span class="k">\n</span><span class="s">"</span><span class="k">;</span> }</span></div>
      <div class="cl" style="top:535.7px"><span class="ln">39.</span><span class="cd" id="cd39" style="left:96.4px">}</span></div>
      <div class="cl" style="top:551.6px"><span class="ln">40.</span><span class="cd" id="cd40" style="left:96.4px"><span class="k">else</span> { <span class="w">cout<svg class="wv"><rect width="100%" height="3" fill="url(#wvp)"/></svg></span> <span class="o">&lt;&lt;</span> <span class="s">"</span><span class="s z">输入选项有误！</span><span class="s"> </span><span class="k">\n</span><span class="s">"</span><span class="k">;</span> }</span></div>
    </div>
    <div class="abs" style="left:108px;top:807px;width:24px;height:1px;background:#c8c8c8"></div>
    <div class="abs" style="left:131px;top:807px;width:1px;height:24px;background:#c8c8c8"></div>
    <div class="abs" style="left:132px;top:821px;width:552px;height:2px;background:#7f7f7f"></div>
    <span class="t ft" style="left:514px;top:825px">共</span>
    <span class="t ft" style="left:546px;top:825px">50</span>
    <span class="t ft" style="left:577px;top:825px">页</span>
    <span class="t ft" style="left:617px;top:825px">第</span>
    <span class="t ft" style="left:650px;top:825px">17</span>
    <span class="t ft" style="left:682px;top:825px">页</span>
  </div>
</div>
<div id="status">
  <span class="t" style="left:10px;top:7px;color:#262b3a;letter-spacing:.35px">页面: 18/50</span>
  <div class="abs" style="left:79px;top:6px;width:1px;height:16px;background:#e3e5ea"></div>
  <span class="t" style="left:89px;top:7px;color:#262b3a;letter-spacing:.25px">字数: 15445</span>
  <div class="abs" style="left:161px;top:2px;width:72px;height:24px;background:#e6eefb"></div>
  <svg style="left:165px;top:9px" width="15" height="13" viewBox="0 0 15 13"><path d="M5.500 11.400h-4.900v-10.800h13.400v10.800h-4.900l-1.800 1.300z" fill="none" stroke="#2b3040" stroke-width="1.100" stroke-linejoin="round"/><path d="M4.300 5.800l2.300 2.300 4.200-4.400" fill="none" stroke="#2b3040" stroke-width="1.100"/></svg>
  <span class="t" style="left:183px;top:7px;color:#262b3a">拼写检查</span>
  <i class="dd" style="left:236px;top:14px"></i>
  <div class="abs" style="left:246px;top:6px;width:1px;height:16px;background:#e3e5ea"></div>
  <svg style="left:256px;top:9px" width="15" height="13" viewBox="0 0 15 13"><path d="M1.600 4v-3.400h12.400v11.800h-12.400v-3.400" fill="none" stroke="#2b3040" stroke-width="1.100"/><path d="M4.800 3.500l5.400 5.800M10.200 3.500l-5.400 5.800" fill="none" stroke="#2b3040" stroke-width="1.100"/></svg>
  <span class="t" style="left:275px;top:7px;color:#262b3a">文档校对</span>
  <span class="t" style="left:342px;top:7px;color:#262b3a">兼容模式</span>
  <div class="abs" style="left:396px;top:6px;width:1px;height:16px;background:#e3e5ea"></div>
  <span class="t" style="left:415px;top:4px;font-size:18px;line-height:20px;height:20px;color:#2b3040;font-family:'Liberation Serif',serif">T</span>
  <span class="t" style="left:424px;top:8px;font-size:12px;color:#2b3040">?</span>
  <span class="t" style="left:434px;top:7px;color:#262b3a">缺失字体</span>
</div>
</body>
</html>
